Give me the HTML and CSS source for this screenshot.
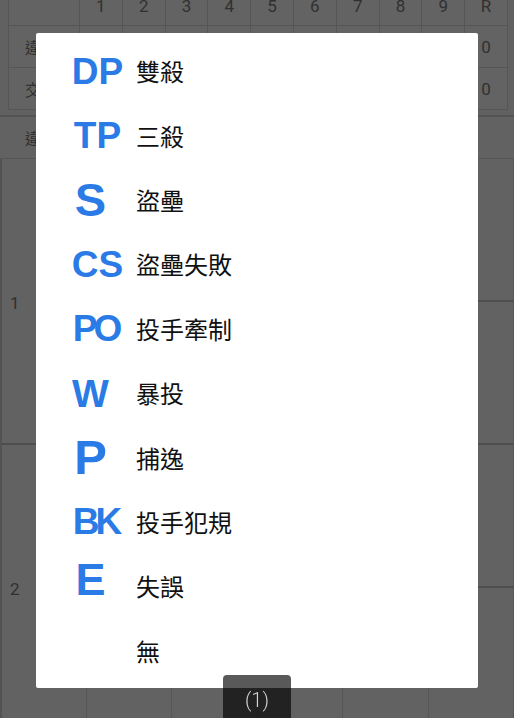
FILE: index.html
```html
<!DOCTYPE html>
<html lang="zh-Hant">
<head>
<meta charset="utf-8">
<title>記錄</title>
<link rel="stylesheet" href="styles.css">
</head>
<body>
<div class="score">
  <div></div><div>1</div><div>2</div><div>3</div><div>4</div><div>5</div><div>6</div><div>7</div><div>8</div><div>9</div><div>R</div>
  <div class="lab">違規</div><div></div><div></div><div></div><div></div><div></div><div></div><div></div><div></div><div></div><div>0</div>
  <div class="lab">交大</div><div></div><div></div><div></div><div></div><div></div><div></div><div></div><div></div><div></div><div>0</div>
</div>
<div class="detail">
  <div class="dhead">違規</div>
  <div class="order">1</div><div class="cell"></div><div class="cell"></div><div class="cell"></div><div class="cell"></div><div class="cell"></div>
  <div class="cell"></div><div class="cell"></div><div class="cell"></div><div class="cell"></div><div class="cell"></div>
  <div class="order">2</div><div class="cell"></div><div class="cell"></div><div class="cell"></div><div class="cell"></div><div class="cell"></div>
  <div class="cell"></div><div class="cell"></div><div class="cell"></div><div class="cell"></div><div class="cell"></div>
</div>
<div class="overlay"></div>
<div class="dialog">
  <div class="item"><span class="code">DP</span><span class="label">雙殺</span></div>
  <div class="item"><span class="code">TP</span><span class="label">三殺</span></div>
  <div class="item"><span class="code one s">S</span><span class="label">盜壘</span></div>
  <div class="item"><span class="code">CS</span><span class="label">盜壘失敗</span></div>
  <div class="item"><span class="code tight">PO</span><span class="label">投手牽制</span></div>
  <div class="item"><span class="code one w">W</span><span class="label">暴投</span></div>
  <div class="item"><span class="code one p">P</span><span class="label">捕逸</span></div>
  <div class="item"><span class="code tight">BK</span><span class="label">投手犯規</span></div>
  <div class="item"><span class="code one e">E</span><span class="label">失誤</span></div>
  <div class="item"><span class="code"></span><span class="label">無</span></div>
</div>
<div class="pager">(1)</div>
</body>
</html>
```
FILE: styles.css
```css
* { box-sizing: border-box; margin: 0; padding: 0; }
html, body { width: 514px; height: 718px; overflow: hidden; }
body {
  background: #f2f2f2;
  font-family: Roboto, "Noto Sans CJK TC", sans-serif;
  color: #7a7a7a;
}

.score {
  display: grid;
  grid-template-columns: 71px repeat(10, 1fr);
  grid-template-rows: 39px 42px 42px;
  width: 500px;
  margin: -13px 0 0 8px;
  border-left: 1px solid #d6d6d6;
  background: #f7f7f7;
}
.score > div {
  border-right: 1px solid #d6d6d6;
  border-bottom: 1px solid #d6d6d6;
  display: flex;
  align-items: center;
  justify-content: center;
  font-size: 17px;
}
.score > .lab {
  justify-content: flex-start;
  padding-left: 16px;
  font-family: "Noto Sans CJK TC", sans-serif;
  font-size: 16px;
}

.detail {
  margin-top: 5px;
  border-top: 2px solid #cfcfcf;
  display: grid;
  grid-template-columns: 87px repeat(5, 1fr);
  grid-template-rows: 42px repeat(4, 143px);
  background: #f4f4f4;
}
.dhead {
  grid-column: 1 / -1;
  display: flex;
  align-items: center;
  padding-left: 25px;
  font-family: "Noto Sans CJK TC", sans-serif;
  font-size: 16px;
  border-bottom: 1px solid #d6d6d6;
}
.order {
  grid-row: span 2;
  display: flex;
  align-items: center;
  padding: 4px 0 0 8px;
  font-size: 17px;
  border-left: 2px solid #cfcfcf;
  border-right: 1px solid #d6d6d6;
  border-bottom: 2px solid #c4c4c4;
}
.cell {
  border-right: 1px solid #d6d6d6;
  border-bottom: 2px solid #c4c4c4;
}

.overlay {
  position: fixed;
  inset: 0;
  background: rgba(0, 0, 0, 0.6);
}

.dialog {
  position: fixed;
  left: 36px;
  top: 33px;
  width: 442px;
  height: 655px;
  background: #fff;
  border-radius: 2px;
  padding: 6px 0 5px;
  display: grid;
  grid-template-rows: repeat(10, 1fr);
}
.item {
  display: flex;
  align-items: center;
  padding-left: 26px;
}
.code {
  width: 74px;
  padding-right: 3px;
  text-align: center;
  font: bold 37px/1 "Liberation Sans", Arial, sans-serif;
  color: #2b7be6;
}
.code.tight { letter-spacing: -4px; padding-right: 7px; }
.code.one { padding-right: 17px; }
.code.s { font-size: 47px; }
.code.w { font-size: 39px; }
.code.p { font-size: 49px; }
.code.e { font-size: 45px; padding-bottom: 14px; }
.label {
  font: 24px/1 "Noto Sans CJK TC", sans-serif;
  color: #111;
}

.pager {
  position: fixed;
  left: 223px;
  width: 68px;
  top: 675px;
  bottom: 0;
  background: rgba(0, 0, 0, 0.65);
  border-radius: 4px 4px 0 0;
  color: #d4d4d4;
  font: 300 20px/20px Roboto, sans-serif;
  text-align: center;
  padding-top: 15px;
}
```
